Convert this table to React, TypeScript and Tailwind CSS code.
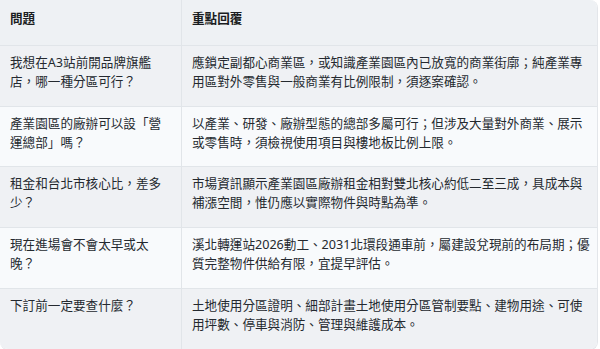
import React from "react";

const rows: [string, string][] = [
  [
    "我想在A3站前開品牌旗艦店，哪一種分區可行？",
    "應鎖定副都心商業區，或知識產業園區內已放寬的商業街廓；純產業專用區對外零售與一般商業有比例限制，須逐案確認。",
  ],
  [
    "產業園區的廠辦可以設「營運總部」嗎？",
    "以產業、研發、廠辦型態的總部多屬可行；但涉及大量對外商業、展示或零售時，須檢視使用項目與樓地板比例上限。",
  ],
  [
    "租金和台北市核心比，差多少？",
    "市場資訊顯示產業園區廠辦租金相對雙北核心約低二至三成，具成本與補漲空間，惟仍應以實際物件與時點為準。",
  ],
  [
    "現在進場會不會太早或太晚？",
    "溪北轉運站2026動工、2031北環段通車前，屬建設兌現前的布局期；優質完整物件供給有限，宜提早評估。",
  ],
  [
    "下訂前一定要查什麼？",
    "土地使用分區證明、細部計畫土地使用分區管制要點、建物用途、可使用坪數、停車與消防、管理與維護成本。",
  ],
];

export default function App() {
  return (
    <div
      className="w-[600px] h-[349px] bg-white"
      style={{ fontFamily: '"Noto Sans", "Noto Sans CJK TC", sans-serif' }}
    >
      <div className="w-[598px] rounded-tr-lg rounded-b-lg overflow-hidden border-r border-b border-[#e3e6ea] text-[12.6px] leading-[1.5] text-[#24292f]">
        <div className="grid grid-cols-[182px_1fr] bg-[#eef1f4] border-b border-[#e1e5e9]">
          <div className="px-[10px] pt-[10px] pb-[16px] border-r border-[#e1e5e9] font-bold text-[#1a1d21]">
            問題
          </div>
          <div className="pl-[10px] pr-[4px] pt-[10px] pb-[16px] font-bold text-[#1a1d21]">
            重點回覆
          </div>
        </div>
        {rows.map(([q, a], i) => (
          <div
            key={i}
            className={
              "grid grid-cols-[182px_1fr] " +
              (i % 2 === 0 ? "bg-[#eff1f4]" : "bg-[#f8fafc]") +
              (i < rows.length - 1 ? " border-b border-[#e1e5e9]" : "")
            }
          >
            <div className="px-[10px] pt-[8px] pb-[14px] border-r border-[#e1e5e9]">
              {q}
            </div>
            <div className="pl-[10px] pr-[4px] pt-[8px] pb-[14px]">{a}</div>
          </div>
        ))}
      </div>
    </div>
  );
}
